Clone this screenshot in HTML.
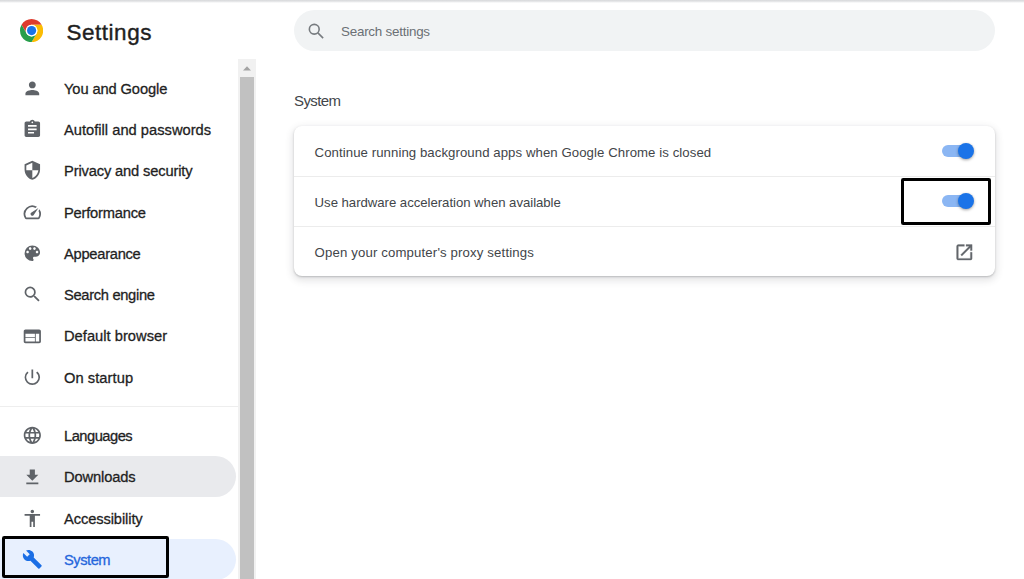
<!DOCTYPE html>
<html lang="en">
<head>
<meta charset="utf-8">
<title>Settings - System</title>
<style>
html,body{margin:0;padding:0;}
body{width:1024px;height:579px;overflow:hidden;background:#fff;position:relative;font-family:"Liberation Sans",sans-serif;color:#1f1f1f;}
.abs{position:absolute;}
#topline{left:0;top:0;width:1024px;height:2.6px;background:linear-gradient(#d8dadc,#dfe0e2 35%,#fff);}
#title{left:66.6px;top:17.6px;font-size:22.5px;line-height:30px;color:#1f1f1f;white-space:nowrap;-webkit-text-stroke:0.4px #1f1f1f;}
.pill{left:0;width:236px;height:41.3px;border-radius:0 21px 21px 0;}
.pill.hover{background:#e9eaed;}
.pill.sel{background:#e8f0fe;}
.ic{width:20.65px;height:20.65px;fill:#5f6368;}
.ic.sel{fill:#1b6ee5;}
.lb{left:64px;line-height:20px;height:20px;font-size:14.7px;color:#1f1f1f;white-space:nowrap;-webkit-text-stroke:0.3px #1f1f1f;}
.lb.sel{color:#2566dc;-webkit-text-stroke:0.3px #2566dc;}
#sep{left:0;top:406px;width:238px;height:1px;background:#eeeeee;}
#track{left:238.4px;top:59px;width:17.5px;height:520px;background:#f1f1f1;}
#thumb{left:240px;top:77px;width:14px;height:502px;background:#c1c1c1;}
#search{left:294px;top:9.9px;width:701px;height:41.1px;border-radius:21px;background:#f1f3f4;}
#ph{left:341px;top:21.8px;line-height:20px;font-size:13.4px;color:#6b7075;white-space:nowrap;}
#h2{left:294px;top:90px;font-size:15px;line-height:22px;color:#424549;white-space:nowrap;}
#card{left:294px;top:126px;width:700.8px;height:150px;border-radius:8px;background:#fff;box-shadow:0 1px 2px rgba(60,64,67,.28),0 3px 7px 2px rgba(60,64,67,.13);}
.div{left:294px;width:700.8px;height:1px;background:#ececec;}
.t{line-height:20px;height:20px;font-size:13.2px;color:#424549;white-space:nowrap;}
.tg{left:942.3px;width:29px;height:12.6px;border-radius:6.3px;background:#8bb6f3;}
.kn{left:957.6px;width:16.6px;height:16.6px;border-radius:50%;background:#1a73e8;box-shadow:0 1px 3px rgba(0,0,0,.38);}
.box{border:3.3px solid #000;box-sizing:border-box;border-radius:2.2px;}
</style>
</head>
<body>
<div id="topline" class="abs"></div>
<svg class="abs" style="left:19.8px;top:18.6px" width="23.2" height="23.2" viewBox="0 0 48 48">
<circle cx="24" cy="24" r="12" fill="#fff"/>
<path d="M24 12H44.78A24 24 0 0 0 3.22 12L13.61 30A12 12 0 0 1 24 12Z" fill="#de3b2e"/>
<path d="M34.39 30L24 48A24 24 0 0 0 44.78 12H24A12 12 0 0 1 34.39 30Z" fill="#fbbc04"/>
<path d="M13.61 30L3.22 12A24 24 0 0 0 24 48L34.39 30A12 12 0 0 1 13.61 30Z" fill="#279e4b"/>
<circle cx="24" cy="24" r="12" fill="#fff"/>
<circle cx="24" cy="24" r="9.5" fill="#1a73e8"/>
</svg>
<div id="title" class="abs" style="letter-spacing:0.500px">Settings</div>
<div class="abs pill hover" style="top:455.95px"></div>
<div class="abs pill sel" style="top:538.70px"></div>
<svg class="abs ic" style="left:22.22px;top:77.88px" viewBox="0 0 24 24"><path d="M12 12c2.21 0 4-1.79 4-4s-1.790-4-4-4-4 1.790-4 4 1.790 4 4 4zm0 2c-2.670 0-8 1.340-8 4v2h16v-2c0-2.660-5.330-4-8-4z"/></svg><div class="abs lb" id="nav0" style="top:78.60px;letter-spacing:-0.112px">You and Google</div>
<svg class="abs ic" style="left:22.22px;top:119.17px" viewBox="0 0 24 24"><path d="M19 3h-4.180C14.400 1.840 13.300 1 12 1c-1.300 0-2.400.84-2.820 2H5c-1.100 0-2 .9-2 2v14c0 1.100.9 2 2 2h14c1.100 0 2-.9 2-2V5c0-1.100-.9-2-2-2zm-7 0c.55 0 1 .45 1 1s-.45 1-1 1-1-.45-1-1 .45-1 1-1zm2 14H7v-2h7v2zm3-4H7v-2h10v2zm0-4H7V7h10v2z"/></svg><div class="abs lb" id="nav1" style="top:119.90px;letter-spacing:0.007px">Autofill and passwords</div>
<svg class="abs ic" style="left:22.22px;top:160.47px" viewBox="0 0 24 24"><path d="M12 1L3 5v6c0 5.550 3.840 10.740 9 12 5.160-1.260 9-6.450 9-12V5l-9-4zm0 10.990h7c-.53 4.120-3.280 7.790-7 8.940V12H5V6.300l7-3.110v8.800z"/></svg><div class="abs lb" id="nav2" style="top:161.20px;letter-spacing:-0.153px">Privacy and security</div>
<svg class="abs ic" style="left:22.22px;top:201.78px" viewBox="0 0 24 24"><path d="M20.380 8.570l-1.230 1.850a8 8 0 0 1-.22 7.580H5.070A8 8 0 0 1 15.580 6.850l1.850-1.230A10 10 0 0 0 3.350 19a2 2 0 0 0 1.720 1h13.850a2 2 0 0 0 1.740-1 10 10 0 0 0-.27-10.440zm-9.790 6.840a2 2 0 0 0 2.830 0l5.660-8.490-8.490 5.660a2 2 0 0 0 0 2.830z"/></svg><div class="abs lb" id="nav3" style="top:202.50px;letter-spacing:-0.210px">Performance</div>
<svg class="abs ic" style="left:22.22px;top:243.08px" viewBox="0 0 24 24"><path d="M12 3a9 9 0 0 0 0 18c.83 0 1.500-.67 1.500-1.500 0-.39-.15-.74-.39-1.010-.23-.26-.38-.61-.38-.99 0-.83.67-1.500 1.500-1.500H16c2.760 0 5-2.240 5-5 0-4.420-4.030-8-9-8zm-5.500 9c-.83 0-1.500-.67-1.500-1.500S5.670 9 6.500 9 8 9.670 8 10.500 7.330 12 6.500 12zm3-4C8.670 8 8 7.330 8 6.500S8.670 5 9.500 5s1.500.67 1.500 1.500S10.330 8 9.500 8zm5 0c-.83 0-1.500-.67-1.500-1.500S13.670 5 14.500 5s1.500.67 1.500 1.500S15.330 8 14.500 8zm3 4c-.83 0-1.500-.67-1.500-1.500S16.670 9 17.500 9s1.500.67 1.500 1.500-.67 1.500-1.500 1.500z"/></svg><div class="abs lb" id="nav4" style="top:243.80px;letter-spacing:-0.269px">Appearance</div>
<svg class="abs ic" style="left:22.22px;top:284.38px" viewBox="0 0 24 24"><path d="M15.500 14h-.79l-.28-.27A6.471 6.471 0 0 0 16 9.500 6.500 6.500 0 1 0 9.500 16c1.610 0 3.090-.59 4.230-1.570l.27.28v.79l5 4.990L20.490 19l-4.990-5zm-6 0C7.010 14 5 11.990 5 9.500S7.010 5 9.500 5 14 7.010 14 9.500 11.990 14 9.500 14z"/></svg><div class="abs lb" id="nav5" style="top:285.10px;letter-spacing:-0.319px">Search engine</div>
<svg class="abs ic" style="left:22.22px;top:325.67px" viewBox="0 0 24 24"><path d="M20 4H4c-1.100 0-2 .9-2 2v12c0 1.100.9 2 2 2h16c1.100 0 2-.9 2-2V6c0-1.100-.9-2-2-2zm-5 14H4v-4h11v4zm0-5H4V9h11v4zm5 5h-4V9h4v9z"/></svg><div class="abs lb" id="nav6" style="top:326.40px;letter-spacing:0.016px">Default browser</div>
<svg class="abs ic" style="left:22.22px;top:366.97px" viewBox="0 0 24 24"><path d="M13 3h-2v10h2V3zm4.830 2.170l-1.420 1.420A6.920 6.920 0 0 1 19 12c0 3.870-3.130 7-7 7A6.995 6.995 0 0 1 7.580 6.580L6.170 5.170A8.932 8.932 0 0 0 3 12a9 9 0 0 0 18 0c0-2.740-1.230-5.180-3.170-6.830z"/></svg><div class="abs lb" id="nav7" style="top:367.70px;letter-spacing:0.055px">On startup</div>
<svg class="abs ic" style="left:22.22px;top:425.47px" viewBox="0 0 24 24"><path d="M11.990 2C6.470 2 2 6.480 2 12s4.470 10 9.990 10C17.520 22 22 17.520 22 12S17.520 2 11.990 2zm6.930 6h-2.950a15.650 15.650 0 0 0-1.380-3.560A8.030 8.030 0 0 1 18.920 8zM12 4.040c.83 1.200 1.480 2.530 1.910 3.960h-3.820c.43-1.430 1.080-2.760 1.910-3.960zM4.260 14C4.100 13.360 4 12.690 4 12s.1-1.360.26-2h3.380c-.08.66-.14 1.320-.14 2s.06 1.340.14 2H4.260zm.82 2h2.950c.32 1.250.78 2.450 1.380 3.560A7.987 7.987 0 0 1 5.080 16zm2.950-8H5.080a7.987 7.987 0 0 1 4.330-3.560A15.650 15.650 0 0 0 8.030 8zM12 19.960c-.83-1.200-1.480-2.530-1.910-3.960h3.820c-.43 1.430-1.080 2.760-1.910 3.960zM14.340 14H9.660c-.09-.66-.16-1.320-.16-2s.07-1.350.16-2h4.680c.09.65.16 1.320.16 2s-.07 1.340-.16 2zm.25 5.560c.6-1.110 1.060-2.310 1.380-3.560h2.950a8.030 8.030 0 0 1-4.330 3.560zM16.360 14c.08-.66.14-1.320.14-2s-.06-1.340-.14-2h3.380c.16.64.26 1.310.26 2s-.1 1.360-.26 2h-3.380z"/></svg><div class="abs lb" id="nav8" style="top:426.20px;letter-spacing:-0.500px">Languages</div>
<svg class="abs ic" style="left:22.22px;top:466.67px" viewBox="0 0 24 24"><path d="M19 9h-4V3H9v6H5l7 7 7-7zM5 18v2h14v-2H5z"/></svg><div class="abs lb" id="nav9" style="top:467.40px;letter-spacing:-0.122px">Downloads</div>
<svg class="abs ic" style="left:22.22px;top:507.87px" viewBox="0 0 24 24"><path d="M12 2c1.100 0 2 .9 2 2s-.9 2-2 2-2-.9-2-2 .9-2 2-2zm9 7h-6v13h-2v-6h-2v6H9V9H3V7h18v2z"/></svg><div class="abs lb" id="nav10" style="top:508.60px;letter-spacing:-0.106px">Accessibility</div>
<svg class="abs ic sel" style="left:22.22px;top:549.07px" viewBox="0 0 24 24"><path d="M22.700 19l-9.100-9.100c.9-2.300.4-5-1.500-6.900-2-2-5-2.400-7.400-1.300L9 6 6 9 1.600 4.700C.4 7.100.9 10.100 2.900 12.100c1.900 1.900 4.600 2.400 6.900 1.500l9.100 9.100c.4.400 1 .4 1.400 0l2.300-2.300c.5-.4.5-1.100.1-1.400z"/></svg><div class="abs lb sel" id="nav11" style="top:549.80px;letter-spacing:-0.480px">System</div>
<div id="sep" class="abs"></div>
<div class="abs box" style="left:2px;top:535.8px;width:166.5px;height:42.6px"></div>
<div id="track" class="abs"></div>
<div id="thumb" class="abs"></div>
<svg class="abs" style="left:243.2px;top:65.9px" width="8" height="5" viewBox="0 0 8 5"><path d="M0 4.5L4 0.3L8 4.5Z" fill="#a3a3a3"/></svg>
<div id="search" class="abs"></div>
<svg class="abs" style="left:306.07px;top:20.57px;width:20.65px;height:20.65px" viewBox="0 0 24 24" fill="none" stroke="#777b7f" stroke-width="1.85"><circle cx="9.6" cy="9.6" r="5.7"/><path d="M13.8 13.8L19.9 19.9"/></svg>
<div id="ph" class="abs" style="letter-spacing:-0.231px">Search settings</div>
<div id="h2" class="abs" style="letter-spacing:-0.620px">System</div>
<div id="card" class="abs"></div>
<div class="abs div" style="top:176px"></div>
<div class="abs div" style="top:226px"></div>
<div class="abs t" id="row0" style="left:314.6px;top:142.60px;letter-spacing:0.072px">Continue running background apps when Google Chrome is closed</div>
<div class="abs t" id="row1" style="left:314.6px;top:192.90px;letter-spacing:-0.039px">Use hardware acceleration when available</div>
<div class="abs t" id="row2" style="left:314.6px;top:243.20px;letter-spacing:0.143px">Open your computer's proxy settings</div>
<div class="abs tg" style="top:144.60px"></div><div class="abs kn" style="top:142.50px"></div>
<div class="abs tg" style="top:194.90px"></div><div class="abs kn" style="top:192.80px"></div>
<svg class="abs" style="left:953.85px;top:241.50px;width:20.7px;height:20.7px;fill:#63676c;stroke:#63676c;stroke-width:0.35" viewBox="0 0 24 24"><path d="M19 19H5V5h7V3H5a2 2 0 0 0-2 2v14a2 2 0 0 0 2 2h14c1.100 0 2-.9 2-2v-7h-2v7zM14 3v2h3.590l-9.830 9.830 1.410 1.410L19 6.410V10h2V3h-7z"/></svg>
<div class="abs box" style="left:900.7px;top:178.3px;width:90.8px;height:46.8px"></div>
</body>
</html>
